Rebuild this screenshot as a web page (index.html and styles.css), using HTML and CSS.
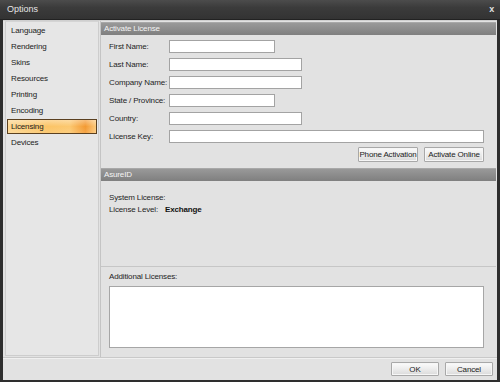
FILE: index.html
```html
<!DOCTYPE html>
<html>
<head>
<meta charset="utf-8">
<link rel="stylesheet" href="styles.css">
</head>
<body>
<div class="window">
  <div class="titlebar">
    <span class="title">Options</span>
    <span class="close">x</span>
  </div>
  <div class="body">
    <div class="main">
      <ul class="nav">
        <li class="item">Language</li>
        <li class="item">Rendering</li>
        <li class="item">Skins</li>
        <li class="item">Resources</li>
        <li class="item">Printing</li>
        <li class="item">Encoding</li>
        <li class="item selected">Licensing</li>
        <li class="item">Devices</li>
      </ul>
      <div class="content">
        <div class="section activate">
          <div class="header">Activate License</div>
          <div class="form">
            <label class="lbl">First Name:</label><div class="field w-short"></div>
            <label class="lbl">Last Name:</label><div class="field w-mid"></div>
            <label class="lbl">Company Name:</label><div class="field w-mid"></div>
            <label class="lbl">State / Province:</label><div class="field w-short"></div>
            <label class="lbl">Country:</label><div class="field w-mid"></div>
            <label class="lbl">License Key:</label><div class="field w-long"></div>
          </div>
          <div class="actions">
            <button class="btn btn-wide">Phone Activation</button>
            <button class="btn btn-wide">Activate Online</button>
          </div>
        </div>
        <div class="section asure">
          <div class="header">AsureID</div>
          <div class="info">
            <div class="info-row"><span class="info-lbl">System License:</span><span class="info-val"></span></div>
            <div class="info-row"><span class="info-lbl">License Level:</span><span class="info-val">Exchange</span></div>
          </div>
        </div>
        <div class="section additional">
          <div class="add-lbl">Additional Licenses:</div>
          <div class="textarea"></div>
        </div>
      </div>
    </div>
    <div class="footer">
      <button class="btn btn-ok">OK</button>
      <button class="btn btn-ok">Cancel</button>
    </div>
  </div>
</div>
</body>
</html>
```
FILE: styles.css
```css
* { box-sizing: border-box; }
html, body { margin: 0; padding: 0; }
body {
  background: #2a2a2a;
  font-family: "Liberation Sans", Arial, sans-serif;
  font-size: 8px;
  letter-spacing: -0.15px;
  color: #1e1e1e;
  white-space: nowrap;
}
.window {
  width: 500px;
  height: 382px;
  display: flex;
  flex-direction: column;
  background: #2e2e2e;
}
.titlebar {
  height: 20px;
  flex: none;
  display: flex;
  align-items: center;
  justify-content: space-between;
  padding: 0 6px 1px 7px;
  background: linear-gradient(to bottom, #4c4c4c 0%, #3b3b3b 40%, #333 100%);
  border-bottom: 1px solid #222;
}
.title {
  color: #e6e6e6;
  font-size: 9px;
  letter-spacing: 0;
}
.close {
  color: #e0e0e0;
  font-weight: bold;
  font-size: 9px;
}
.body {
  flex: 1;
  margin: 0 3px 2px 3px;
  background: #e2e2e2;
  display: flex;
  flex-direction: column;
  border-top: 1px solid #cfcfcf;
}
.main {
  flex: 1;
  display: flex;
  padding: 0 1px 0 2px;
  border-bottom: 1px solid #c9c9c9;
}
.nav {
  list-style: none;
  margin: 0;
  padding: 1px 0 0 1px;
  width: 94px;
  flex: none;
  background: #e6e6e6;
  border: 1px solid #cdcdcd;
  border-top-color: #d4d4d4;
  margin-bottom: 1px;
}
.item {
  height: 16px;
  line-height: 16px;
  padding-left: 4px;
  color: #222;
}
.item.selected {
  height: 15px;
  line-height: 13px;
  margin: 0 1px 1px 0;
  padding-left: 3px;
  border: 1px solid #5a4020;
  background:
    linear-gradient(to bottom, rgba(255,255,255,0.35) 0%, rgba(255,255,255,0) 50%, rgba(255,255,255,0.1) 100%),
    linear-gradient(to right, #fcd690 0%, #fbc466 45%, #fcc870 70%, #f39a33 88%, #fcc97a 100%);
  color: #1a1a1a;
}
.content {
  flex: 1;
  display: flex;
  flex-direction: column;
  border-left: 1px solid #c4c4c4;
  margin-left: 1px;
}
.section { display: flex; flex-direction: column; }
.header {
  height: 13px;
  line-height: 12px;
  padding-left: 3px;
  color: #f4f4f4;
  background: linear-gradient(to bottom, #999 0%, #8c8c8c 50%, #7f7f7f 100%);
  border-top: 1px solid #a8a8a8;
}
.activate .header { margin-top: 1px; }
.form {
  display: grid;
  grid-template-columns: 60px 1fr;
  grid-auto-rows: 13px;
  row-gap: 5px;
  padding: 5px 0 0 8px;
  align-items: center;
}
.lbl { line-height: 13px; }
.field {
  height: 13px;
  background: #fff;
  border: 1px solid #a3a3a3;
}
.w-short { width: 106px; }
.w-mid { width: 133px; }
.w-long { width: 315px; }
.form .field:last-child { margin-top: -1px; }
.actions {
  display: flex;
  justify-content: flex-end;
  gap: 6px;
  padding: 4px 12px 6px 0;
}
.btn {
  font-family: "Liberation Sans", Arial, sans-serif;
  font-size: 8px;
  letter-spacing: -0.15px;
  white-space: nowrap;
  color: #222;
  height: 15px;
  padding: 0;
  border: 1px solid #a8a8a8;
  border-radius: 1px;
  background: linear-gradient(to bottom, #fbfbfb 0%, #ececec 50%, #dadada 100%);
  box-shadow: inset 0 0 0 1px #f6f6f6;
}
.btn-wide { width: 60px; }
.asure { height: 99px; border-bottom: 1px solid #c6c6c6; }
.info { padding: 11px 0 0 8px; }
.info-row {
  display: flex;
  height: 12px;
  line-height: 12px;
}
.info-lbl { width: 56px; flex: none; }
.info-val { font-weight: bold; color: #111; }
.additional {
  flex: 1;
  padding: 4px 12px 9px 8px;
}
.add-lbl { height: 15px; line-height: 12px; }
.textarea {
  flex: 1;
  background: #fff;
  border: 1px solid #a6a6a6;
}
.footer {
  height: 22px;
  flex: none;
  display: flex;
  justify-content: flex-end;
  align-items: center;
  gap: 6px;
  padding: 0 4px 1px 0;
  border-top: 1px solid #f0f0f0;
}
.btn-ok { width: 48px; height: 14px; }
```
